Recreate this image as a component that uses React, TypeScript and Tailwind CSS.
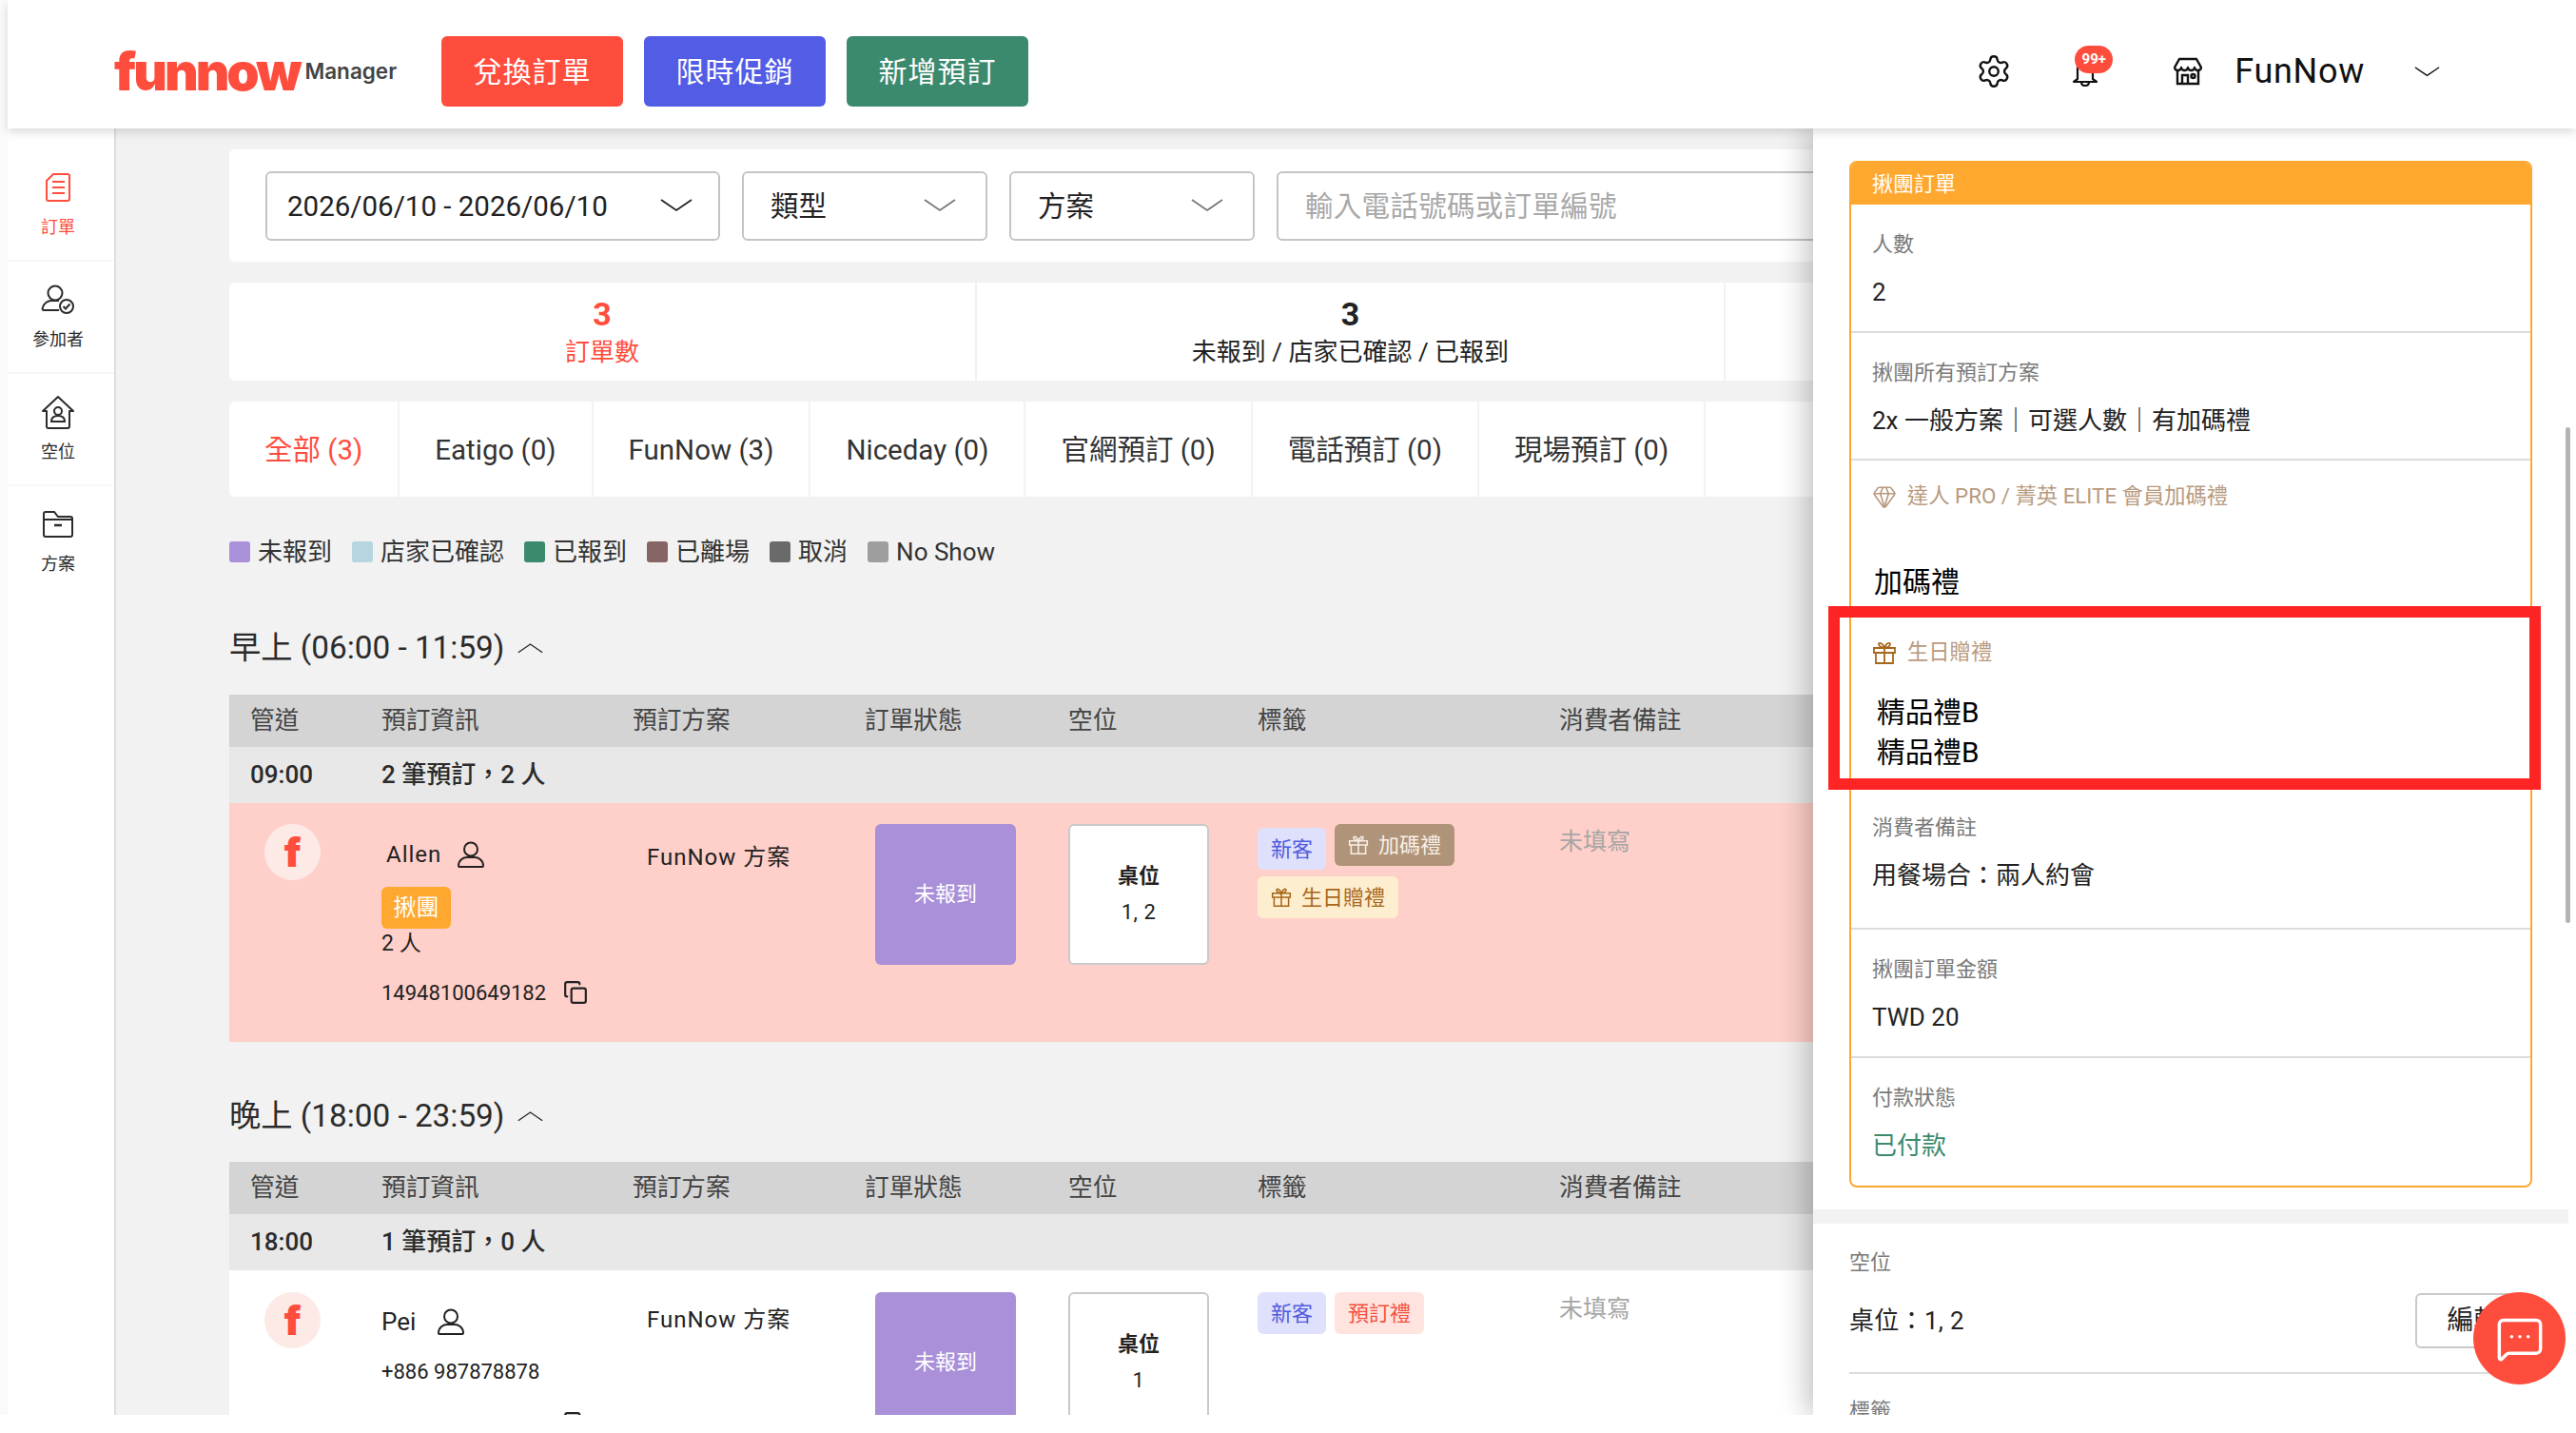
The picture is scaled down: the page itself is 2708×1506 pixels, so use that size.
import { Copy, Gem, MessageSquareMore, Settings } from 'lucide-react';

const FONT = "font-[Roboto,'Noto_Sans_CJK_TC',sans-serif]";

function Chevron({ className, up }: { className: string; up?: boolean }) {
  return (
    <svg viewBox="0 0 34 14" fill="none" stroke="currentColor" strokeWidth="1.8" className={className}>
      <path d={up ? 'M1 13 17 2l16 11' : 'M1 1l16 11L33 1'} />
    </svg>
  );
}

function Person({ className }: { className: string }) {
  return (
    <svg viewBox="0 0 30 28" fill="none" stroke="currentColor" strokeWidth="2" className={className}>
      <circle cx="15" cy="8.5" r="7" />
      <path d="M2 26c0-6 5-9 9-9h8c4 0 9 3 9 9 0 .6-.4 1-1 1H3c-.6 0-1-.4-1-1Z" />
    </svg>
  );
}

function GiftBox({ className }: { className: string }) {
  return (
    <svg viewBox="0 0 26 26" fill="none" stroke="currentColor" strokeWidth="1.8" className={className}>
      <path d="M2 8h22v5H2ZM4 13v11h18V13M13 8v16" />
      <path d="M13 8C10 8 7 6 7 4c0-2 4-2 6 4 2-6 6-6 6-4 0 2-3 4-6 4Z" />
    </svg>
  );
}

function NavOrder() {
  return (
    <svg viewBox="0 0 26 32" fill="none" stroke="#ff4d3d" strokeWidth="2" className="h-[32px] w-[26px]">
      <path d="M8 2h15c1 0 2 1 2 2v24c0 1-1 2-2 2H3c-1 0-2-1-2-2V9Z" />
      <path d="M7 10h13M7 16h13M7 22h13" />
    </svg>
  );
}

function NavParticipant() {
  return (
    <svg viewBox="0 0 36 32" fill="none" stroke="#2b2b2b" strokeWidth="2" className="h-[32px] w-[36px]">
      <circle cx="15" cy="9" r="7.5" />
      <path d="M19 27H3c-1 0-2-1-1-3 1-4 5-7 9-7h8" />
      <circle cx="27" cy="23" r="7" />
      <path d="m23.5 23 2.5 2.5 4.5-5" />
    </svg>
  );
}

function NavSpace() {
  return (
    <svg viewBox="0 0 36 36" fill="none" stroke="#2b2b2b" strokeWidth="2" className="h-[36px] w-[36px]">
      <path d="M2 17 18 2l16 15h-4v16c0 1-1 2-2 2H8c-1 0-2-1-2-2V17Z" strokeLinejoin="round" />
      <circle cx="18" cy="17" r="4" />
      <path d="M11 28c0-4 3-6 7-6s7 2 7 6Z" />
    </svg>
  );
}

function NavPlan() {
  return (
    <svg viewBox="0 0 32 28" fill="none" stroke="#2b2b2b" strokeWidth="2" className="h-[28px] w-[32px]">
      <path d="M1 9V3c0-1 1-2 2-2h9l4 5h13c1 0 2 1 2 2v17c0 1-1 2-2 2H3c-1 0-2-1-2-2Zm0 0h30" />
      <path d="M12 15h8" strokeWidth="2.5" />
    </svg>
  );
}

function Store() {
  return (
    <svg viewBox="0 0 30 30" fill="none" stroke="#111" strokeWidth="2.4" className="h-[30px] w-[30px]">
      <path d="M6 2h18l5 9c0 2-2 3-3.500 3S22 13 22 11c0 2-2 3-3.500 3S15 13 15 11c0 2-2 3-3.500 3S8 13 8 11c0 2-2 3-3.500 3S1 13 1 11Z" strokeLinejoin="round" />
      <path d="M4 14v14h22V14M9 28v-9h6v9" />
      <circle cx="20.500" cy="20" r="2" />
    </svg>
  );
}

function Bell() {
  return (
    <svg viewBox="0 0 26 30" fill="none" stroke="#111" strokeWidth="2.2" className="h-[30px] w-[26px]">
      <path d="M5 22V10c0-5 3-8 8-8s8 3 8 8v12l4 3H1Z" strokeLinejoin="round" />
      <path d="M9 25c0 3 2 4 4 4s4-1 4-4" />
    </svg>
  );
}

function SelectBox({ label, className, dark }: { label: string; className: string; dark?: boolean }) {
  return (
    <div className={`flex h-[73px] items-center justify-between rounded-md border-2 border-[#c4c4c4] ${className}`}>
      <span className="pt-[2px] text-[29.5px] text-[#222]">{label}</span>
      <Chevron className={`h-[14px] w-[34px] ${dark ? 'text-[#222]' : 'text-[#777]'}`} />
    </div>
  );
}

function TableHead() {
  return (
    <div className="grid h-[55px] grid-cols-[160px_264px_244px_214px_199px_317px_400px] items-center bg-[#d4d4d4] text-[25.7px] text-[#444]">
      <span className="pl-[22px]">管道</span>
      <span>預訂資訊</span>
      <span>預訂方案</span>
      <span>訂單狀態</span>
      <span>空位</span>
      <span>標籤</span>
      <span>消費者備註</span>
    </div>
  );
}

function TimeRow({ time, summary }: { time: string; summary: string }) {
  return (
    <div className="grid h-[59px] grid-cols-[160px_1fr] items-center bg-[#e8e8e8] text-[26px] font-medium text-[#2b2b2b]">
      <span className="pl-[22px]">{time}</span>
      <span>{summary}</span>
    </div>
  );
}

function ChannelMark() {
  return (
    <div className="ml-[37px] flex h-[59px] w-[59px] items-center justify-center rounded-full bg-[#fdeae7]">
      <span className="font-[Inter,sans-serif] text-[42px] leading-none font-black text-[#ff4d3d]">f</span>
    </div>
  );
}

function StatusBlock() {
  return (
    <div className="ml-[11px] flex h-[148px] w-[148px] items-start justify-center rounded-md bg-[#aa8fd9] pt-[60px] text-[22px] leading-[28px] text-white">
      未報到
    </div>
  );
}

function SeatBlock({ seat }: { seat: string }) {
  return (
    <div className="flex h-[148px] w-[148px] flex-col items-center rounded-md border-2 border-[#c9c9c9] bg-white pt-[38px] text-[#222]">
      <span className="text-[22px] leading-[30px] font-bold">桌位</span>
      <span className="mt-[8px] text-[22px] leading-[30px] tracking-[0.5px]">{seat}</span>
    </div>
  );
}

function Tag({ label, className, gift }: { label: string; className: string; gift?: boolean }) {
  return (
    <span className={`flex h-[44px] items-center rounded-md px-[14px] text-[22px] ${className}`}>
      {gift && <GiftBox className="mr-[10px] h-[22px] w-[22px]" />}
      {label}
    </span>
  );
}

function PanelSection({
  label,
  value,
  className,
  valueClass = 'text-[#222]',
  line = true,
}: {
  label: string;
  value: string;
  className: string;
  valueClass?: string;
  line?: boolean;
}) {
  return (
    <div className={`px-[22px] ${line ? 'border-b-2 border-[#dcdcdc]' : ''} ${className}`}>
      <div className="h-[30px] text-[22px] leading-[30px] text-[#7a7a7a]">{label}</div>
      <div className={`mt-[20px] h-[30px] text-[26px] leading-[30px] ${valueClass}`}>{value}</div>
    </div>
  );
}

const NAV = [
  { label: '訂單', icon: <NavOrder />, active: true },
  { label: '參加者', icon: <NavParticipant /> },
  { label: '空位', icon: <NavSpace /> },
  { label: '方案', icon: <NavPlan /> },
];

const TABS = ['全部 (3)', 'Eatigo (0)', 'FunNow (3)', 'Niceday (0)', '官網預訂 (0)', '電話預訂 (0)', '現場預訂 (0)'];

const LEGEND = [
  ['未報到', 'bg-[#aa8fd9]'],
  ['店家已確認', 'bg-[#b5d5e0]'],
  ['已報到', 'bg-[#3c8a6e]'],
  ['已離場', 'bg-[#866565]'],
  ['取消', 'bg-[#6a6a6a]'],
  ['No Show', 'bg-[#9e9e9e]'],
];

export default function App() {
  return (
    <div className={`flex h-[1506px] w-[2708px] flex-col overflow-hidden bg-[#fafafa] ${FONT}`}>
      {/* top bar */}
      <header className="relative z-20 ml-[8px] flex h-[135px] shrink-0 items-center bg-white pt-[15px] shadow-[0_4px_10px_rgba(0,0,0,0.14)]">
        <div className="ml-[112px] flex w-[344px] items-center">
          <span className="font-[Inter,sans-serif] text-[55px] leading-none font-black tracking-[-3px] text-[#ff4d3d]">funnow</span>
          <span className="ml-[6px] font-[Inter,sans-serif] text-[22.5px] font-semibold text-[#444]">Manager</span>
        </div>
        <div className="flex gap-[22px] text-[30px] tracking-[1px] text-white">
          <button className="h-[74px] w-[191px] rounded-md bg-[#ff4d3d]">兌換訂單</button>
          <button className="h-[74px] w-[191px] rounded-md bg-[#525ce5]">限時促銷</button>
          <button className="h-[74px] w-[191px] rounded-md bg-[#3c8a6e]">新增預訂</button>
        </div>
        <div className="ml-auto flex items-center text-[#111]">
          <Settings className="h-[38px] w-[38px]" strokeWidth={1.5} />
          <div className="relative mt-[2px] ml-[64px]">
            <Bell />
            <span className="absolute top-[-13px] left-[2px] flex h-[29px] w-[40px] items-center justify-center rounded-full bg-[#ff4d3d] text-[15px] font-bold text-white">99+</span>
          </div>
          <div className="ml-[80px]">
            <Store />
          </div>
          <span className="ml-[34px] text-[36px] tracking-[0.7px]">FunNow</span>
          <Chevron className="mr-[143px] ml-[52px] h-[11px] w-[27px]" />
        </div>
      </header>

      <div className="relative flex h-[1352px] shrink-0 overflow-hidden">
        {/* left nav */}
        <nav className="ml-[8px] w-[114px] shrink-0 border-r-2 border-[#dedede] bg-white pt-[22px]">
          {NAV.map((item) => (
            <div
              key={item.label}
              className={`flex h-[118px] flex-col items-center border-b-2 border-[#f7f7f7] pt-[22px] pr-[6px] last:border-b-0 ${item.active ? 'text-[#ff4d3d]' : 'text-[#2b2b2b]'}`}
            >
              <div className="flex h-[36px] items-center">{item.icon}</div>
              <span className="mt-[11px] text-[18px] leading-[26px]">{item.label}</span>
            </div>
          ))}
        </nav>

        {/* order list */}
        <main className="min-w-0 flex-1 overflow-hidden bg-[#f2f2f2] pt-[22px] pl-[119px]">
          <div className="w-[2400px]">
            <div className="flex h-[118px] items-center gap-[23px] rounded-md bg-white pl-[38px]">
              <SelectBox dark label="2026/06/10 - 2026/06/10" className="w-[478px] pr-[27px] pl-[21px]" />
              <SelectBox label="類型" className="w-[258px] pr-[31px] pl-[28px]" />
              <SelectBox label="方案" className="w-[258px] pr-[31px] pl-[28px]" />
              <div className="flex h-[73px] w-[1000px] items-center rounded-md border-2 border-[#c4c4c4] pt-[2px] pl-[28px] text-[29.5px] tracking-[0.3px] text-[#a8a8a8]">
                輸入電話號碼或訂單編號
              </div>
            </div>

            <div className="mt-[22px] flex h-[103px] rounded-md bg-white">
              <div className="flex w-[786px] flex-col items-center border-r-2 border-[#f2f2f2] pt-[14px] text-[#ff4d3d]">
                <span className="text-[34px] leading-[38px] font-bold">3</span>
                <span className="mt-[3px] text-[26px] leading-[36px]">訂單數</span>
              </div>
              <div className="flex w-[787px] flex-col items-center border-r-2 border-[#f2f2f2] pt-[14px] text-[#222]">
                <span className="text-[34px] leading-[38px] font-bold">3</span>
                <span className="mt-[3px] text-[26px] leading-[36px]">未報到 / 店家已確認 / 已報到</span>
              </div>
            </div>

            <div className="mt-[22px] flex h-[100px] rounded-md bg-white">
              {TABS.map((tab, i) => (
                <div
                  key={tab}
                  className={`flex items-center border-r-2 border-[#f2f2f2] px-[37px] pt-[2px] text-[29.5px] ${i === 0 ? 'text-[#ff4d3d]' : 'text-[#333]'}`}
                >
                  {tab}
                </div>
              ))}
            </div>

            <div className="mt-[47px] flex h-[22px] items-center gap-[21px] text-[26px] text-[#333]">
              {LEGEND.map(([label, color]) => (
                <div key={label} className="flex items-center gap-[8px]">
                  <span className={`h-[22px] w-[22px] rounded-[3px] ${color}`} />
                  <span>{label}</span>
                </div>
              ))}
            </div>

            <div className="mt-[70px] flex h-[40px] items-center gap-[14px] text-[33.3px] text-[#2b2b2b]">
              早上 (06:00 - 11:59)
              <Chevron up className="h-[14px] w-[27px]" />
            </div>
            <div className="mt-[29px]">
              <TableHead />
              <TimeRow time="09:00" summary="2 筆預訂，2 人" />
              <div className="grid h-[251px] grid-cols-[160px_264px_244px_214px_199px_317px_400px] bg-[#ffcfc9] pt-[22px] text-[#222]">
                <ChannelMark />
                <div className="pt-[15px]">
                  <div className="flex h-[34px] items-center pl-[5px] text-[24px] tracking-[1px]">
                    Allen
                    <Person className="ml-[16px] h-[28px] w-[30px]" />
                  </div>
                  <span className="mt-[17px] flex h-[44px] w-[73px] items-center justify-center rounded-md bg-[#ffa82f] text-[24px] text-white">揪團</span>
                  <div className="mt-[2px] h-[28px] text-[23px] leading-[28px]">2 人</div>
                  <div className="mt-[23px] flex h-[28px] items-center text-[22px]">
                    14948100649182
                    <Copy className="ml-[18px] h-[26px] w-[26px]" strokeWidth={2} />
                  </div>
                </div>
                <div className="pt-[20px] pl-[15px] text-[24px] leading-[30px] tracking-[1px]">FunNow 方案</div>
                <StatusBlock />
                <SeatBlock seat="1, 2" />
                <div>
                  <div className="flex gap-[9px]">
                    <Tag label="新客" className="mt-[4px] bg-[#dfe0fb] text-[#4f5bde]" />
                    <Tag gift label="加碼禮" className="bg-[#b09479] text-[#f7efe6]" />
                  </div>
                  <div className="mt-[7px] flex">
                    <Tag gift label="生日贈禮" className="bg-[#fdeecf] text-[#a8661a]" />
                  </div>
                </div>
                <div className="pt-[3px] text-[25px] leading-[32px] text-[#a6a6a6]">未填寫</div>
              </div>
            </div>

            <div className="mt-[58px] flex h-[40px] items-center gap-[14px] text-[33.3px] text-[#2b2b2b]">
              晚上 (18:00 - 23:59)
              <Chevron up className="h-[14px] w-[27px]" />
            </div>
            <div className="mt-[28px]">
              <TableHead />
              <TimeRow time="18:00" summary="1 筆預訂，0 人" />
              <div className="grid h-[251px] grid-cols-[160px_264px_244px_214px_199px_317px_400px] bg-white pt-[23px] text-[#222]">
                <ChannelMark />
                <div className="pt-[14px]">
                  <div className="flex h-[34px] items-center text-[26px]">
                    Pei
                    <Person className="ml-[22px] h-[28px] w-[30px]" />
                  </div>
                  <div className="mt-[22px] h-[28px] text-[22px] leading-[28px]">+886 987878878</div>
                  <Copy className="mt-[27px] ml-[191px] h-[26px] w-[26px]" strokeWidth={2} />
                </div>
                <div className="pt-[14px] pl-[15px] text-[24px] leading-[30px] tracking-[1px]">FunNow 方案</div>
                <StatusBlock />
                <SeatBlock seat="1" />
                <div className="flex items-start gap-[9px]">
                  <Tag label="新客" className="bg-[#dfe0fb] text-[#4f5bde]" />
                  <Tag label="預訂禮" className="bg-[#ffe3df] text-[#f4503c]" />
                </div>
                <div className="pt-[2px] text-[25px] leading-[32px] text-[#a6a6a6]">未填寫</div>
              </div>
            </div>
          </div>
        </main>

        {/* order detail drawer */}
        <aside className="relative z-10 w-[802px] shrink-0 bg-white pt-[34px] shadow-[-4px_0_30px_rgba(0,0,0,0.28)]">
          <div className="mx-[38px] w-[718px] overflow-hidden rounded-lg border-2 border-[#ffa82f]">
            <div className="flex h-[44px] items-center bg-[#ffa82f] px-[22px] text-[22px] text-white">揪團訂單</div>
            <PanelSection label="人數" value="2" className="h-[135px] pt-[27px]" />
            <PanelSection label="揪團所有預訂方案" value="2x 一般方案｜可選人數｜有加碼禮" className="h-[134px] pt-[27px]" />
            <div className="h-[165px] border-b-2 border-[#dcdcdc] px-[22px] pt-[23px]">
              <div className="flex h-[30px] items-center text-[22.3px] text-[#b89a7e]">
                <Gem className="mr-[11px] h-[26px] w-[26px]" strokeWidth={1.5} />
                達人 PRO / 菁英 ELITE 會員加碼禮
              </div>
              <div className="mt-[60px] h-[30px] pl-[2px] text-[30px] leading-[30px] text-black">加碼禮</div>
            </div>
            <div className="h-[181px] border-b-2 border-[#dcdcdc] px-[22px] pt-[22px]">
              <div className="flex h-[30px] items-center text-[22.3px] text-[#b89a7e]">
                <GiftBox className="mr-[11px] h-[26px] w-[26px] text-[#a8661a]" />
                生日贈禮
              </div>
              <div className="mt-[27px] pl-[5px] text-[29.7px] leading-[42px] text-black">
                <div>精品禮B</div>
                <div>精品禮B</div>
              </div>
            </div>
            <PanelSection label="消費者備註" value="用餐場合：兩人約會" className="h-[147px] pt-[25px]" />
            <PanelSection label="揪團訂單金額" value="TWD 20" className="h-[135px] pt-[27px]" />
            <PanelSection line={false} label="付款狀態" value="已付款" valueClass="text-[#3c8a6e]" className="h-[134px] pt-[27px]" />
          </div>

          <div className="mt-[23px] h-[15px] w-[794px] bg-[#f2f2f2]" />

          <div className="mx-[38px] w-[718px]">
            <div className="mt-[26px] h-[30px] text-[22px] leading-[30px] text-[#7a7a7a]">空位</div>
            <div className="mt-[17px] flex h-[58px] items-center justify-between">
              <span className="text-[26px] tracking-[0.3px] text-[#222]">桌位：1, 2</span>
              <button className="h-[58px] w-[123px] rounded-md border-2 border-[#c9c9c9] text-[28px] text-[#222]">編輯</button>
            </div>
            <div className="mt-[25px] border-b-2 border-[#dcdcdc]" />
            <div className="mt-[24px] text-[22px] leading-[30px] text-[#7a7a7a]">標籤</div>
          </div>

          <div className="absolute top-[314px] right-[6px] h-[521px] w-[5px] rounded-full bg-[#b4b4b4]" />
          <div className="absolute top-[502px] left-[16px] h-[193px] w-[749px] border-[12px] border-[#ff2424]" />
          <div className="absolute top-[1223px] left-[694px] flex h-[97px] w-[97px] items-center justify-center rounded-full bg-[#ff4d3d] text-white">
            <MessageSquareMore className="h-[52px] w-[52px]" strokeWidth={1.6} />
          </div>
        </aside>
      </div>
      <div className="h-[19px] shrink-0 bg-white" />
    </div>
  );
}
